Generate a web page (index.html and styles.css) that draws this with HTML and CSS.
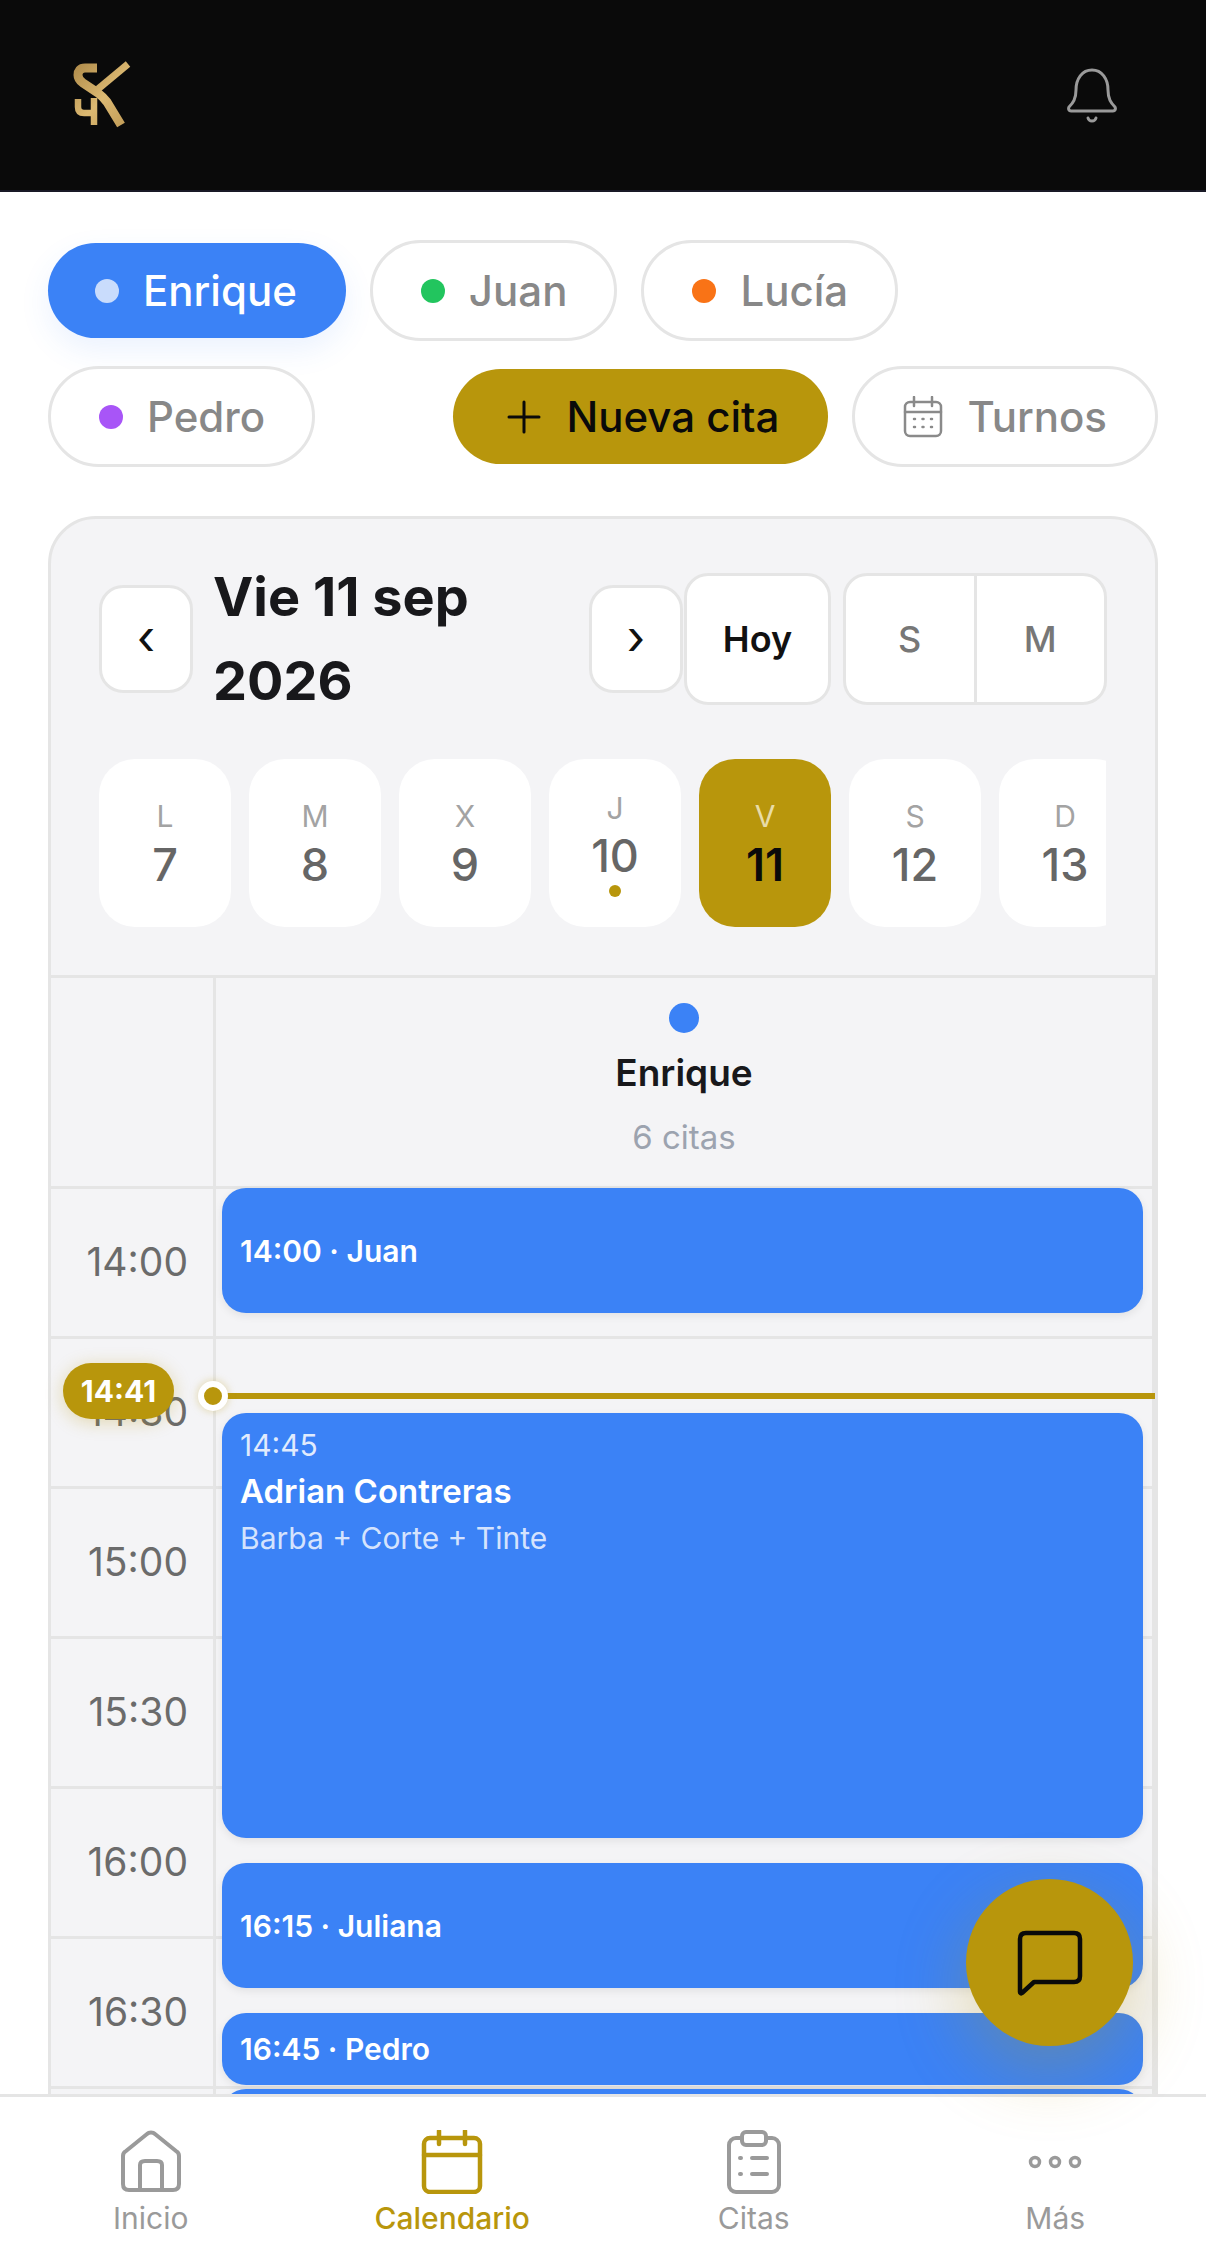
FILE: index.html
```html
<!DOCTYPE html>
<html lang="es">
<head>
<meta charset="utf-8">
<title>Calendario</title>
<link rel="stylesheet" href="styles.css">
</head>
<body>
<div class="app">
  <header class="topbar">
    <svg class="logo" viewBox="0 0 70 70" width="70" height="70" fill="none">
      <defs><linearGradient id="gold" gradientUnits="userSpaceOnUse" x1="0" y1="0" x2="70" y2="70"><stop offset="0" stop-color="#a98545"/><stop offset=".5" stop-color="#dcb972"/><stop offset="1" stop-color="#b8924e"/></linearGradient></defs>
      <path d="M26 8H14C9 8 7 11 7 15C7 19 9 21 12 23L27 33C31 36 33 38 36 42L50 65" stroke="url(#gold)" stroke-width="9"/>
      <path d="M57 4L27 29" stroke="url(#gold)" stroke-width="7"/>
      <path d="M7 39V47C7 51 9 53 13 53H25M23 38V65" stroke="url(#gold)" stroke-width="6.500"/>
    </svg>
    <svg class="bell" viewBox="0 0 50 56" width="50" height="56" fill="none" stroke="#9a9a9a" stroke-width="3" stroke-linecap="round" stroke-linejoin="round">
      <path d="M9 22C9 11 15 2 25 2C35 2 41 11 41 22C41 31 44 35 48 39C49 41 48 43 46 43H4C2 43 1 41 2 39C6 35 9 31 9 22Z"/>
      <path d="M21 50C22 54 28 54 29 50"/>
    </svg>
  </header>

  <section class="toolbar">
    <div class="toolbar-row">
      <button class="chip chip-active"><span class="dot dot-light"></span>Enrique</button>
      <button class="chip"><span class="dot dot-green"></span>Juan</button>
      <button class="chip"><span class="dot dot-orange"></span>Lucía</button>
    </div>
    <div class="toolbar-row">
      <button class="chip"><span class="dot dot-purple"></span>Pedro</button>
      <button class="chip chip-primary">
        <svg viewBox="0 0 34 34" width="34" height="34" fill="none" stroke="#0a0a0a" stroke-width="3" stroke-linecap="round"><path d="M17 2V32M2 17H32"/></svg>
        Nueva cita
      </button>
      <button class="chip chip-turnos">
        <svg viewBox="0 0 40 42" width="40" height="42" fill="none" stroke="#8a8a8a" stroke-width="2.500" stroke-linecap="round"><rect x="2" y="6" width="36" height="34" rx="5"/><path d="M2 16H38M11 1V10M29 1V10"/><path d="M11 23H12M19.500 23H20.500M28 23H29M11 31H12M19.500 31H20.500M28 31H29"/></svg>
        Turnos
      </button>
    </div>
  </section>

  <section class="card">
    <div class="datebar">
      <button class="square">‹</button>
      <h1 class="title">Vie 11 sep 2026</h1>
      <button class="square">›</button>
      <button class="today">Hoy</button>
      <div class="segment"><button>S</button><button>M</button></div>
    </div>

    <div class="days">
      <div class="day"><span class="wd">L</span><span class="num">7</span></div>
      <div class="day"><span class="wd">M</span><span class="num">8</span></div>
      <div class="day"><span class="wd">X</span><span class="num">9</span></div>
      <div class="day day-mark"><span class="wd">J</span><span class="num">10</span><i class="mark"></i></div>
      <div class="day day-on"><span class="wd">V</span><span class="num">11</span></div>
      <div class="day"><span class="wd">S</span><span class="num">12</span></div>
      <div class="day"><span class="wd">D</span><span class="num">13</span></div>
    </div>

    <div class="grid-head">
      <div class="corner"></div>
      <div class="staff">
        <span class="staff-dot"></span>
        <strong>Enrique</strong>
        <small>6 citas</small>
      </div>
    </div>

    <div class="timeline">
      <div class="row"><div class="hour">14:00</div><div class="slot"></div></div>
      <div class="row"><div class="hour">14:30</div><div class="slot"></div></div>
      <div class="row"><div class="hour">15:00</div><div class="slot"></div></div>
      <div class="row"><div class="hour">15:30</div><div class="slot"></div></div>
      <div class="row"><div class="hour">16:00</div><div class="slot"></div></div>
      <div class="row"><div class="hour">16:30</div><div class="slot"></div></div>
      <div class="row"><div class="hour">17:00</div><div class="slot"></div></div>

      <div class="event ev-juan">14:00 · Juan</div>
      <div class="event event-long ev-adrian">
        <span class="ev-time">14:45</span>
        <span class="ev-name">Adrian Contreras</span>
        <span class="ev-service">Barba + Corte + Tinte</span>
      </div>
      <div class="event ev-juliana">16:15 · Juliana</div>
      <div class="event ev-pedro">16:45 · Pedro</div>
      <div class="event ev-next"></div>

      <div class="now-line"></div>
      <div class="now-dot"></div>
      <div class="now-badge">14:41</div>
    </div>
  </section>

  <nav class="tabbar">
    <a class="tab">
      <svg viewBox="0 0 62 64" width="62" height="64" fill="none" stroke="#9a9a9a" stroke-width="4" stroke-linejoin="round"><path d="M3 26C3 24 4 22 6 21L27 4C29 2 33 2 35 4L56 21C58 22 59 24 59 26V54C59 58 57 60 53 60H9C5 60 3 58 3 54Z"/><path d="M20 60V35C20 32 22 31 25 31H37C40 31 42 32 42 35V60"/></svg>
      <span>Inicio</span>
    </a>
    <a class="tab tab-on">
      <svg viewBox="0 0 62 64" width="62" height="64" fill="none" stroke="#b8960c" stroke-width="4.500" stroke-linecap="round"><rect x="3" y="8" width="56" height="54" rx="6"/><path d="M3 25H59M18 1V14M44 1V14"/></svg>
      <span>Calendario</span>
    </a>
    <a class="tab">
      <svg viewBox="0 0 62 64" width="62" height="64" fill="none" stroke="#9a9a9a" stroke-width="4" stroke-linecap="round"><rect x="6" y="8" width="50" height="54" rx="7"/><rect x="19" y="2" width="24" height="13" rx="4" fill="#fff"/><path d="M17 28H18M29 28H44M17 44H18M29 44H44"/></svg>
      <span>Citas</span>
    </a>
    <a class="tab">
      <svg viewBox="0 0 62 64" width="62" height="64" fill="none" stroke="#9a9a9a" stroke-width="3.500"><circle cx="11" cy="32" r="4.500"/><circle cx="31" cy="32" r="4.500"/><circle cx="51" cy="32" r="4.500"/></svg>
      <span>Más</span>
    </a>
  </nav>

  <button class="fab">
    <svg viewBox="0 0 66 66" width="66" height="66" fill="none" stroke="#0a0a0a" stroke-width="4.500" stroke-linejoin="round"><path d="M3 9C3 5 5 3 9 3H57C61 3 63 5 63 9V46C63 50 61 52 57 52H17L5 63C4 64 3 63 3 62Z"/></svg>
  </button>
</div>
</body>
</html>
```
FILE: styles.css
```css
* { box-sizing: border-box; }
html, body { margin: 0; padding: 0; background: #fff; }
body { font-family: Inter, "Liberation Sans", sans-serif; color: #111; }
button { font-family: inherit; }

.app {
  position: relative;
  width: 1206px;
  height: 2267px;
  overflow: hidden;
  background: #fff;
  display: flex;
  flex-direction: column;
}

/* top bar */
.topbar {
  flex: none;
  height: 192px;
  background: #0a0a0a;
  border-bottom: 2px solid #191926;
  display: flex;
  align-items: center;
  justify-content: space-between;
  padding: 0 89px 0 71px;
}
.logo { display: block; }
.bell { display: block; margin-top: 2px; }

/* filter chips */
.toolbar {
  flex: none;
  display: flex;
  flex-direction: column;
  gap: 25px;
  padding: 48px 48px 0;
}
.toolbar-row {
  display: flex;
  align-items: center;
  gap: 24px;
}
.chip {
  height: 101px;
  padding: 0 47px 0 48px;
  display: flex;
  align-items: center;
  gap: 24px;
  border: 3px solid #e5e5e5;
  border-radius: 51px;
  background: #fff;
  color: #888;
  font-size: 42px;
  font-weight: 500;
}
.chip-active {
  height: 95px;
  padding: 0 49px 0 47px;
  color: #fff;
  background: #3b82f6;
  border: 0;
  box-shadow: 0 12px 30px rgba(59, 130, 246, .1);
}
.chip-primary {
  height: 95px;
  margin-left: auto;
  padding: 0 49px 0 54px;
  gap: 25px;
  color: #0a0a0a;
  background: #b8960c;
  border: 0;
}
.chip-turnos { padding: 0 48px 0 48px; }
.dot { width: 24px; height: 24px; border-radius: 50%; }
.dot-light { background: #c9dcfc; }
.dot-green { background: #22c55e; }
.dot-orange { background: #f97316; }
.dot-purple { background: #a855f7; }

/* calendar card */
.card {
  flex: none;
  margin: 49px 48px 0;
  border: 3px solid #e5e5e5;
  border-radius: 48px;
  background: #f4f4f6;
}
.datebar {
  display: flex;
  align-items: center;
  padding: 36px 49px 0 48px;
}
.square {
  flex: none;
  width: 94px;
  height: 108px;
  border: 3px solid #e5e5e5;
  border-radius: 24px;
  background: #fff;
  color: #111;
  font-size: 48px;
  font-weight: 400;
  padding: 0 0 6px;
}
.title {
  flex: none;
  width: 396px;
  margin: 0;
  padding-left: 20px;
  padding-right: 90px;
  font-size: 54px;
  line-height: 84px;
  font-weight: 700;
  color: #18181b;
}
.today {
  flex: none;
  width: 147px;
  height: 132px;
  margin-left: 1px;
  border: 3px solid #e5e5e5;
  border-radius: 24px;
  background: #fff;
  color: #111;
  font-size: 36px;
  font-weight: 600;
}
.segment {
  flex: none;
  display: flex;
  width: 264px;
  height: 132px;
  margin-left: 12px;
  border: 3px solid #e5e5e5;
  border-radius: 24px;
  background: #fff;
  overflow: hidden;
}
.segment button {
  flex: 1;
  border: 0;
  background: transparent;
  color: #777;
  font-size: 36px;
  font-weight: 500;
}
.segment button + button { border-left: 3px solid #e5e5e5; }

/* day strip */
.days {
  display: flex;
  gap: 18px;
  width: 1007px;
  margin: 36px 0 0 48px;
  overflow: hidden;
}
.day {
  flex: none;
  width: 132px;
  height: 168px;
  border-radius: 36px;
  background: #fff;
  display: flex;
  flex-direction: column;
  align-items: center;
  padding-top: 42px;
  color: #666;
}
.wd { font-size: 30px; line-height: 30px; color: #a3a3a3; }
.num { font-size: 45px; line-height: 54px; margin-top: 7px; font-weight: 500; }
.day-mark { padding-top: 34px; }
.day-mark .num { margin-top: 6px; }
.mark { width: 12px; height: 12px; border-radius: 50%; background: #b8960c; margin-top: 2px; }
.day-on { background: #b8960c; color: #0a0a0a; }
.day-on .wd { color: #e8dca8; }
.day-on .num { font-weight: 600; }

/* grid */
.grid-head {
  display: flex;
  height: 211px;
  margin-top: 48px;
  border-top: 3px solid #e5e5e5;
}
.corner {
  flex: none;
  width: 165px;
  border-right: 3px solid #e5e5e5;
}
.staff {
  flex: 1;
  display: flex;
  flex-direction: column;
  align-items: center;
  padding-top: 25px;
  border-right: 3px solid #e5e5e5;
}
.staff-dot { width: 30px; height: 30px; border-radius: 50%; background: #3b82f6; }
.staff strong { margin-top: 16px; font-size: 37px; line-height: 48px; font-weight: 600; color: #18181b; }
.staff small { margin-top: 20px; font-size: 33px; line-height: 40px; color: #9ca3af; }

.timeline { position: relative; }
.row {
  display: flex;
  height: 150px;
  border-top: 3px solid #e5e5e5;
}
.hour {
  flex: none;
  width: 165px;
  padding-right: 25px;
  padding-bottom: 2px;
  border-right: 3px solid #e5e5e5;
  display: flex;
  align-items: center;
  justify-content: flex-end;
  font-size: 39px;
  color: #6b6b6b;
}
.slot { flex: 1; border-right: 3px solid #e5e5e5; }

.event {
  position: absolute;
  left: 171px;
  width: 921px;
  padding: 0 18px;
  display: flex;
  align-items: center;
  border-radius: 24px;
  background: #3b82f6;
  color: #fff;
  font-size: 30px;
  font-weight: 600;
  box-shadow: 0 3px 9px rgba(0, 0, 0, .08);
}
.event-long {
  flex-direction: column;
  align-items: flex-start;
  padding-top: 14px;
}
.ev-juan { top: 2px; height: 125px; }
.ev-adrian { top: 227px; height: 425px; }
.ev-juliana { top: 677px; height: 125px; }
.ev-pedro { top: 827px; height: 72px; }
.ev-next { top: 903px; height: 100px; }
.ev-time { font-size: 30px; line-height: 36px; font-weight: 400; color: rgba(255, 255, 255, .85); }
.ev-name { margin-top: 7px; font-size: 33px; line-height: 42px; font-weight: 600; }
.ev-service { margin-top: 7px; font-size: 30px; line-height: 38px; font-weight: 400; color: rgba(255, 255, 255, .8); }

.now-line {
  position: absolute;
  left: 162px;
  right: 0;
  top: 207px;
  height: 6px;
  background: #b8960c;
}
.now-dot {
  position: absolute;
  left: 147px;
  top: 195px;
  width: 30px;
  height: 30px;
  border-radius: 50%;
  background: #b8960c;
  border: 6px solid #fff;
  box-shadow: 0 0 9px rgba(184, 150, 12, .35);
}
.now-badge {
  position: absolute;
  left: 12px;
  top: 177px;
  width: 111px;
  height: 56px;
  border-radius: 28px;
  background: #b8960c;
  color: #fff;
  font-size: 30px;
  font-weight: 700;
  display: flex;
  align-items: center;
  justify-content: center;
  box-shadow: 0 3px 18px rgba(184, 150, 12, .3);
}

/* bottom tabs */
.tabbar {
  position: absolute;
  left: 0;
  right: 0;
  bottom: 0;
  height: 173px;
  border-top: 3px solid #e5e5e5;
  background: #fff;
  display: grid;
  grid-template-columns: repeat(4, 1fr);
}
.tab {
  display: flex;
  flex-direction: column;
  align-items: center;
  padding-top: 33px;
  color: #9a9a9a;
  font-size: 30px;
  font-weight: 400;
}
.tab span { margin-top: 6px; line-height: 36px; }
.tab-on { color: #b8960c; font-weight: 500; }

.fab {
  position: absolute;
  left: 966px;
  top: 1879px;
  width: 167px;
  height: 167px;
  border: 0;
  border-radius: 50%;
  background: #b8960c;
  display: flex;
  align-items: center;
  justify-content: center;
  box-shadow: 0 24px 72px rgba(184, 150, 12, .3);
}
```
